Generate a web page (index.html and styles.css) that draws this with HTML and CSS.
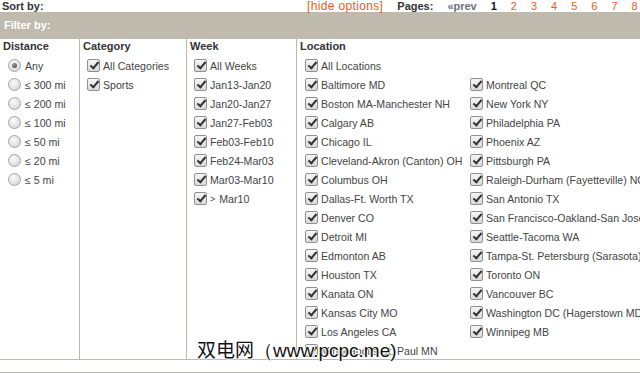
FILE: index.html
```html
<!DOCTYPE html>
<html lang="en">
<head>
  <meta charset="UTF-8">
  <title>Filter</title>
  <link rel="stylesheet" href="styles.css">
</head>
<body>
  <div class="top-bar">
    <span class="sort-by">Sort by:</span>
    <div class="pager">
      <a class="hide-opts" href="#">[hide options]</a>
      <span class="pages-label">Pages:</span>
      <a class="prev" href="#">&laquo;prev</a>
      <span class="page cur">1</span>
      <a class="page" href="#">2</a>
      <a class="page" href="#">3</a>
      <a class="page" href="#">4</a>
      <a class="page" href="#">5</a>
      <a class="page" href="#">6</a>
      <a class="page" href="#">7</a>
      <a class="page" href="#">8</a>
      <a class="page" href="#">9</a>
    </div>
  </div>

  <div class="filter-head">Filter by:</div>

  <div class="filters">
    <div class="col col-distance">
      <h4>Distance</h4>
      <ul class="opts">
        <li><i class="radio on"></i>Any</li>
        <li><i class="radio"></i>&le; 300 mi</li>
        <li><i class="radio"></i>&le; 200 mi</li>
        <li><i class="radio"></i>&le; 100 mi</li>
        <li><i class="radio"></i>&le; 50 mi</li>
        <li><i class="radio"></i>&le; 20 mi</li>
        <li><i class="radio"></i>&le; 5 mi</li>
      </ul>
    </div>

    <div class="col col-category">
      <h4>Category</h4>
      <ul class="opts">
        <li><i class="check"></i>All Categories</li>
        <li><i class="check"></i>Sports</li>
      </ul>
    </div>

    <div class="col col-week">
      <h4>Week</h4>
      <ul class="opts">
        <li><i class="check"></i>All Weeks</li>
        <li><i class="check"></i>Jan13-Jan20</li>
        <li><i class="check"></i>Jan20-Jan27</li>
        <li><i class="check"></i>Jan27-Feb03</li>
        <li><i class="check"></i>Feb03-Feb10</li>
        <li><i class="check"></i>Feb24-Mar03</li>
        <li><i class="check"></i>Mar03-Mar10</li>
        <li><i class="check"></i><span class="gt">&gt;</span>Mar10</li>
      </ul>
    </div>

    <div class="col col-location">
      <h4>Location</h4>
      <ul class="opts">
        <li><i class="check"></i>All Locations</li>
      </ul>
      <div class="loc-lists">
        <ul class="opts loc-left">
          <li><i class="check"></i>Baltimore MD</li>
          <li><i class="check"></i>Boston MA-Manchester NH</li>
          <li><i class="check"></i>Calgary AB</li>
          <li><i class="check"></i>Chicago IL</li>
          <li><i class="check"></i>Cleveland-Akron (Canton) OH</li>
          <li><i class="check"></i>Columbus OH</li>
          <li><i class="check"></i>Dallas-Ft. Worth TX</li>
          <li><i class="check"></i>Denver CO</li>
          <li><i class="check"></i>Detroit MI</li>
          <li><i class="check"></i>Edmonton AB</li>
          <li><i class="check"></i>Houston TX</li>
          <li><i class="check"></i>Kanata ON</li>
          <li><i class="check"></i>Kansas City MO</li>
          <li><i class="check"></i>Los Angeles CA</li>
          <li><i class="check"></i>Minneapolis-St. Paul MN</li>
        </ul>
        <ul class="opts loc-right">
          <li><i class="check"></i>Montreal QC</li>
          <li><i class="check"></i>New York NY</li>
          <li><i class="check"></i>Philadelphia PA</li>
          <li><i class="check"></i>Phoenix AZ</li>
          <li><i class="check"></i>Pittsburgh PA</li>
          <li><i class="check"></i>Raleigh-Durham (Fayetteville) NC</li>
          <li><i class="check"></i>San Antonio TX</li>
          <li><i class="check"></i>San Francisco-Oakland-San Jose CA</li>
          <li><i class="check"></i>Seattle-Tacoma WA</li>
          <li><i class="check"></i>Tampa-St. Petersburg (Sarasota) FL</li>
          <li><i class="check"></i>Toronto ON</li>
          <li><i class="check"></i>Vancouver BC</li>
          <li><i class="check"></i>Washington DC (Hagerstown MD)</li>
          <li><i class="check"></i>Winnipeg MB</li>
        </ul>
      </div>
    </div>
  </div>
  <div class="bottom-rule"></div>

  <div class="watermark">双电网<span class="wm-url">（www.pcpc.me)</span></div>
</body>
</html>
```

FILE: styles.css
```css
/*reset*/
html {
    overflow: hidden;
}

body {
    margin: 0;
    width: 780px;
    position: relative;
    font-family: Arial, "Liberation Sans", sans-serif;
    font-size: 11px;
    color: #333;
}

ul, li, h4 {
    margin: 0;
    padding: 0;
}

li {
    list-style: none;
}

a {
    text-decoration: none;
    color: inherit;
}

i {
    font-style: normal;
}

/*top bar*/
.top-bar {
    display: flex;
    height: 12px;
    line-height: 12px;
    white-space: nowrap;
}

.sort-by {
    flex: 0 0 305px;
    padding-left: 2px;
    font-weight: bold;
}

.pager {
    display: flex;
}

.hide-opts {
    color: #ee5a1e;
    font-size: 12px;
    letter-spacing: .35px;
}

.pages-label {
    margin-left: 14px;
    font-weight: bold;
}

.prev {
    margin-left: 14px;
    color: #6b6f7a;
    font-weight: bold;
}

.page {
    margin-left: 14px;
    color: #ee5a1e;
}

.page.cur {
    color: #111;
    font-weight: bold;
}

/*filter head*/
.filter-head {
    height: 27px;
    line-height: 27px;
    padding-left: 4px;
    background-color: #bebaae;
    color: #fff;
    font-weight: bold;
}

/*columns*/
.filters {
    display: flex;
    height: 320px;
    border-bottom: 1px solid #bebaae;
}

.col {
    padding: 0 0 0 3px;
    border-right: 1px solid #bebaae;
    box-sizing: border-box;
}

.col-distance { width: 80px; }
.col-category { width: 107px; }
.col-week { width: 110px; }
.col-location { flex: 1; border-right: 0; }

.col h4 {
    font-size: 11px;
    line-height: 15px;
    font-weight: bold;
    color: #333;
}

.opts {
    padding-top: 2px;
}

.opts li {
    display: flex;
    align-items: center;
    height: 19px;
    padding-left: 4px;
    font-size: 10.6px;
    color: #444;
    white-space: nowrap;
}

.col-distance .opts li { padding-left: 5px; }
.col-location .opts li { padding-left: 5px; }

.loc-lists {
    display: flex;
}

.loc-lists .opts {
    padding-top: 0;
}

.loc-left {
    width: 170px;
}

.col-location .loc-right li {
    padding-left: 0;
}

.loc-right .check {
    margin-right: 3px;
}

.gt {
    font-size: 9px;
    margin-right: 4px;
}

/*radio*/
.radio {
    flex: none;
    position: relative;
    width: 13px;
    height: 13px;
    margin-right: 4px;
    border-radius: 50%;
    box-sizing: border-box;
    border: 1px solid #a4a4a4;
    background: radial-gradient(circle at 40% 35%, #fbfbfb, #dcdcdc 70%, #cfcfcf);
}

.radio.on::after {
    content: "";
    position: absolute;
    left: 3px;
    top: 3px;
    width: 5px;
    height: 5px;
    border-radius: 50%;
    background: radial-gradient(circle at 40% 35%, #9a9a9a, #3f3f3f);
}

/*checkbox*/
.check {
    flex: none;
    position: relative;
    width: 13px;
    height: 13px;
    margin-right: 3px;
    border-radius: 2px;
    box-sizing: border-box;
    border: 1px solid #8f9090;
    background: linear-gradient(#f6f6f6, #d9d9d9);
}

.check::after {
    content: "";
    position: absolute;
    left: 4px;
    top: 0;
    width: 3px;
    height: 7px;
    border-right: 2px solid #333;
    border-bottom: 2px solid #333;
    transform: rotate(40deg);
}

.bottom-rule {
    margin-top: 12px;
    border-top: 1px solid #bebaae;
}

/*watermark over the list*/
.watermark {
    position: absolute;
    left: 197px;
    top: 337px;
    font-family: "Noto Sans CJK SC", sans-serif;
    font-size: 19px;
    line-height: 24px;
    color: #111;
    white-space: nowrap;
    text-shadow: 1px 0 #fff, -1px 0 #fff, 0 1px #fff, 0 -1px #fff;
}

.wm-url {
    font-family: "Liberation Sans", sans-serif;
    font-size: 19px;
}
```
